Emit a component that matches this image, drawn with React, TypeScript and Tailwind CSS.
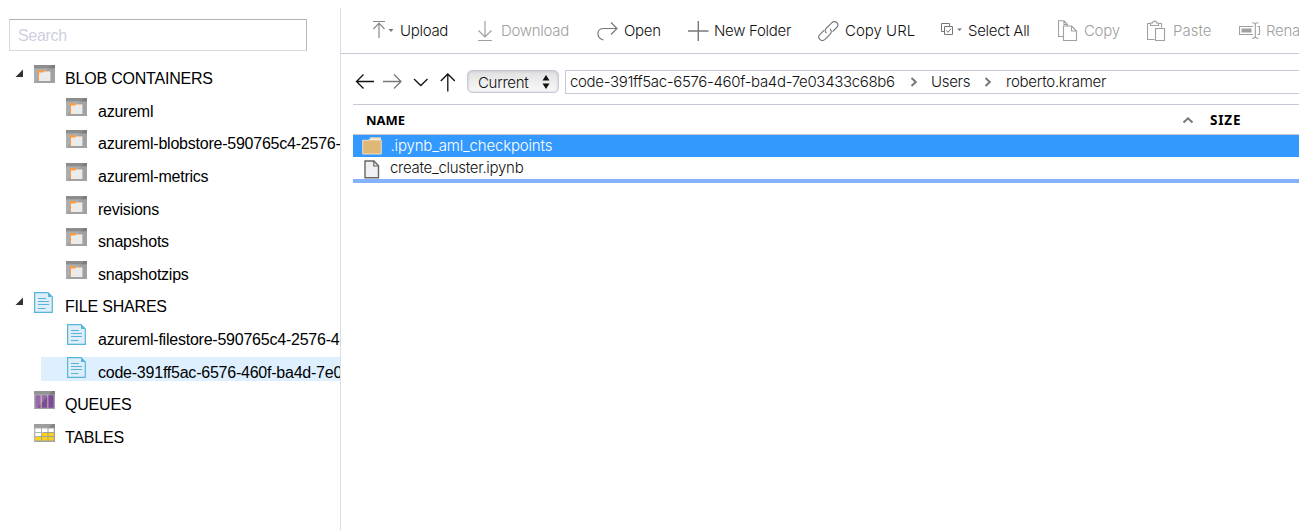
import type { ReactNode } from "react";

function ContainerIcon() {
  return (
    <svg width="21" height="18" viewBox="0 0 21 18" className="block">
      <rect width="21" height="18" fill="#a0a1a2" />
      <rect width="21" height="3.3" fill="#7d7d7d" />
      <path d="M0 0H18L14 4L0 18Z" fill="#ffffff" opacity="0.13" />
      <path d="M4 16V5H8.6L9.8 6H16V16Z" fill="#fb9c45" />
      <path d="M5 16V7.6H9L10 6.6H16.4V16Z" fill="#ebebeb" />
    </svg>
  );
}

function ShareIcon() {
  return (
    <svg width="19" height="21" viewBox="0 0 19 21" className="block">
      <path d="M0.6 0.6H14L18.3 5V20.3H0.6Z" fill="#ddeef8" stroke="#59b4d9" strokeWidth="1.2" />
      <path d="M14 0.5V5H18.5Z" fill="#59b4d9" />
      <path d="M4 6.5H12M4 9.5H15M4 12.5H15M4 16.5H11.5" stroke="#59b4d9" strokeWidth="1" />
    </svg>
  );
}

function QueueIcon() {
  return (
    <svg width="21" height="18" viewBox="0 0 21 18" className="block">
      <rect width="21" height="18" fill="#a0a1a2" />
      <rect width="21" height="3.5" fill="#7d7d7d" />
      <path d="M1.4 4.2H6.5V16.7H1.4ZM8 4.2H13V16.7H8ZM14.5 4.2H19.6V16.7H14.5Z" fill="#804998" />
      <path d="M0 0H18L3.5 17H0Z" fill="#ffffff" opacity="0.18" />
    </svg>
  );
}

function TableIcon() {
  return (
    <svg width="21" height="18" viewBox="0 0 21 18" className="block">
      <rect width="21" height="18" fill="#a0a1a2" />
      <rect width="21" height="3.7" fill="#858585" />
      <path d="M0 0H18L14 4L0 18Z" fill="#ffffff" opacity="0.2" />
      <path d="M1.3 4.5H7V8H1.3ZM8 4.5H13.5V8H8ZM14.5 4.5H19.7V8H14.5ZM1.3 9H7V12H1.3Z" fill="#fff" />
      <path d="M8 9H13.5V12H8ZM14.5 9H19.7V12H14.5ZM1.3 13H7V16.4H1.3ZM8 13H13.5V16.4H8ZM14.5 13H19.7V16.4H14.5Z" fill="#fcd116" />
    </svg>
  );
}

const treeIcons = {
  container: <ContainerIcon />,
  share: <ShareIcon />,
  queue: <QueueIcon />,
  table: <TableIcon />,
};

type Node = {
  label: string;
  icon: keyof typeof treeIcons;
  root?: boolean;
  open?: boolean;
  selected?: boolean;
};

const nodes: Node[] = [
  { label: "BLOB CONTAINERS", icon: "container", root: true, open: true },
  { label: "azureml", icon: "container" },
  { label: "azureml-blobstore-590765c4-2576-", icon: "container" },
  { label: "azureml-metrics", icon: "container" },
  { label: "revisions", icon: "container" },
  { label: "snapshots", icon: "container" },
  { label: "snapshotzips", icon: "container" },
  { label: "FILE SHARES", icon: "share", root: true, open: true },
  { label: "azureml-filestore-590765c4-2576-4", icon: "share" },
  { label: "code-391ff5ac-6576-460f-ba4d-7e0", icon: "share", selected: true },
  { label: "QUEUES", icon: "queue", root: true },
  { label: "TABLES", icon: "table", root: true },
];

function TreeRow({ node }: { node: Node }) {
  return (
    <div className={node.root ? "h-[32.6px]" : "h-[32.6px] pl-[41px]"}>
      <div
        className={`flex h-[24.6px] items-start ${node.root ? "pl-[15px]" : "pl-[25px]"} ${node.selected ? "bg-[#def0ff]" : ""}`}
      >
        {node.root && (
          <span className="w-[18px] shrink-0 pt-[6px]">
            {node.open && (
              <svg width="9" height="9" viewBox="0 0 9 9" className="block">
                <path d="M8 0.5V8H0.5Z" fill="#333" />
              </svg>
            )}
          </span>
        )}
        <span className="flex h-[22px] w-8 shrink-0 items-center justify-start">
          <span className={node.icon === "share" ? "pl-px" : node.root ? "pl-[0.5px]" : ""}>{treeIcons[node.icon]}</span>
        </span>
        <span
          className={`pt-1 text-[16px] leading-6 whitespace-nowrap text-black ${node.root ? "tracking-[-0.2px]" : "tracking-[-0.23px]"}`}
        >
          {node.label}
        </span>
      </div>
    </div>
  );
}

function Glyph({ w, h, children, stroke = "#777", sw = 1.2 }: { w: number; h: number; children: ReactNode; stroke?: string; sw?: number }) {
  return (
    <svg width={w} height={h} viewBox={`0 0 ${w} ${h}`} fill="none" stroke={stroke} strokeWidth={sw} className="block shrink-0">
      {children}
    </svg>
  );
}

const actions: { label: string; off?: boolean; width: string; iconWidth: string; track?: string; icon: ReactNode }[] = [
  {
    label: "Upload", width: "w-[105px]", iconWidth: "w-7",
    icon: (
      <Glyph w={22} h={22}>
        <path d="M1 1.5H13M7 18V3M1.5 9L7 3.2L12.5 9" stroke="#888" />
        <path d="M16.5 9H21.5L19 12Z" fill="#777" stroke="none" />
      </Glyph>
    ),
  },
  {
    label: "Download", off: true, width: "w-[120px]", iconWidth: "w-6",
    icon: (
      <Glyph w={17} h={22} stroke="#a0a0a0">
        <path d="M8 1V17M1.5 10.5L8 17L14.5 10.5M1 20.5H15" />
      </Glyph>
    ),
  },
  {
    label: "Open", width: "w-[91px]", iconWidth: "w-[27px]",
    icon: (
      <Glyph w={22} h={22} stroke="#777">
        <path d="M6.5 20C-1 18 -1 8.5 7 8.5H19.5M14 2.5L20 8.5L14 14.5" />
      </Glyph>
    ),
  },
  {
    label: "New Folder", width: "w-[130px]", iconWidth: "w-[26px]",
    icon: (
      <Glyph w={22} h={22} stroke="#777" sw={1.4}>
        <path d="M0 11H20.5M10.3 1V21" />
      </Glyph>
    ),
  },
  {
    label: "Copy URL", width: "w-[123px]", iconWidth: "w-[27px]", track: "tracking-[0px]",
    icon: (
      <Glyph w={21} h={22} stroke="#777" sw={1.1}>
        <path d="M8.5 13.2C6.5 11.5 7 9.5 8.5 8L13.7 2.8C15.3 1.2 17.6 1.3 18.8 2.5C20.2 4 20.2 6 18.7 7.5L14.5 11.7" />
        <path d="M12 9C14 10.8 13.4 13 12 14.4L7 19.3C5.4 20.8 3.2 20.8 1.8 19.4C0.4 18 0.5 15.8 2 14.3L6.2 10.2" />
      </Glyph>
    ),
  },
  {
    label: "Select All", width: "w-[117px]", iconWidth: "w-[27px]",
    icon: (
      <Glyph w={22} h={22} stroke="#777" sw={1}>
        <path d="M3 11.5H0.5V3.5H8.5V6M3.5 6.5H11.5V14.5H3.5ZM5.3 10.5L7 12.3L10 8.7" />
        <path d="M16 8.5H21L18.5 11Z" fill="#777" stroke="none" />
      </Glyph>
    ),
  },
  {
    label: "Copy", off: true, width: "w-[89px]", iconWidth: "w-[26px]",
    icon: (
      <Glyph w={20} h={22} stroke="#a0a0a0" sw={1.1}>
        <path d="M5.5 16.5H0.5V0.8H6L9.5 4.5V6M6 0.8V4.5H9.5M5.5 6H13.5L18.5 11V20.5H5.5ZM13.5 6V11H18.5" />
      </Glyph>
    ),
  },
  {
    label: "Paste", off: true, width: "w-[92px]", iconWidth: "w-[26px]", track: "tracking-[0px]",
    icon: (
      <Glyph w={19} h={22} stroke="#a0a0a0" sw={1.1}>
        <path d="M7.5 19.5H0.5V3.5H3.5M11.5 3.5H14.5V7.5M3.5 5.5V3H5.5C5.5 0.5 9.5 0.5 9.5 3H11.5V5.5ZM8.5 8.5H17.5V20.5H8.5Z" />
      </Glyph>
    ),
  },
  {
    label: "Rena", off: true, width: "w-[90px]", iconWidth: "w-[27px]",
    icon: (
      <Glyph w={22} h={22} stroke="#a0a0a0" sw={1.1}>
        <path d="M14 6.5H0.5V14.5H14M18.5 6.5H20.5V14.5H18.5M13 2.7C15 2.7 16.3 3 16.3 4.5V16.5C16.3 18 15 18.3 13 18.3M19.5 2.7C17.5 2.7 16.3 3 16.3 4.5M19.5 18.3C17.5 18.3 16.3 18 16.3 16.5" />
        <rect x="2.5" y="8.5" width="10" height="4" fill="#a0a0a0" stroke="none" />
      </Glyph>
    ),
  },
];

function Chevron() {
  return (
    <Glyph w={8} h={10} stroke="#777" sw={2}>
      <path d="M1.5 1L5.8 5L1.5 9" />
    </Glyph>
  );
}

export default function App() {
  return (
    <div className="flex h-[532px] w-[1300px] overflow-hidden bg-white pt-2 pr-px pb-0.5 font-['Liberation_Sans',Arial,sans-serif]">
      <aside className="w-[340px] shrink-0 overflow-hidden">
        <div className="pt-[11px] pl-[9px]">
          <input
            placeholder="Search"
            className="block h-8 w-[298px] border border-[#dadada] border-t-[#b0b0b0] border-r-[#b8b8b8] px-2 pt-0.5 text-[16px] tracking-[-0.3px] text-black outline-none placeholder:text-[#cfcfdf]"
          />
        </div>
        <nav className="pt-[12.2px]">
          {nodes.map((n) => (
            <TreeRow key={n.label} node={n} />
          ))}
        </nav>
      </aside>

      <main className="min-w-0 flex-1 overflow-hidden border-l border-[#dcdce6] font-['Inter','Liberation_Sans',sans-serif] font-light text-[#111]">
        <div className="flex h-[46px] items-center border-b border-[#c8c8dd] pl-[31px]">
          {actions.map((a) => (
            <button key={a.label} className={`flex shrink-0 items-center ${a.width} ${a.off ? "text-[#a0a0a0]" : "text-[#111]"}`}>
              <span className={`shrink-0 ${a.iconWidth}`}>{a.icon}</span>
              <span className={`pt-0.5 text-[15px] whitespace-nowrap ${a.track ?? "tracking-[-0.3px]"}`}>{a.label}</span>
            </button>
          ))}
        </div>

        <div className="flex h-[50px] items-center pt-[5px] pl-[14px]">
          <span className="w-[27px] shrink-0">
            <Glyph w={20} h={20} stroke="#111" sw={1.3}>
              <path d="M19 9.5H1.5M8.5 2.5L1.5 9.5L8.5 16.5" />
            </Glyph>
          </span>
          <span className="w-[29px] shrink-0">
            <Glyph w={20} h={20} stroke="#777" sw={1.3}>
              <path d="M1 9.5H18.5M12 2.5L19 9.5L12 16.5" />
            </Glyph>
          </span>
          <span className="w-[28px] shrink-0">
            <Glyph w={18} h={20} stroke="#111" sw={1.3}>
              <path d="M3 7L9.8 13.5L16.5 7" />
            </Glyph>
          </span>
          <span className="w-[28px] shrink-0">
            <Glyph w={17} h={20} stroke="#111" sw={1.3}>
              <path d="M8.8 19.5V2M1.8 9L8.8 2L15.8 9" />
            </Glyph>
          </span>
          <button className="flex h-[23px] w-[92px] shrink-0 items-center justify-between rounded-[5px] border border-[#c8c8d8] bg-linear-to-b from-[#e0e0e2] to-[#fafafa] pr-[8px] pl-[10px] shadow-[inset_0_0_3px_rgba(0,0,0,0.18)]">
            <span className="pt-[3px] text-[15px] tracking-[-0.3px]">Current</span>
            <svg width="8" height="14" viewBox="0 0 8 14" fill="#111">
              <path d="M4 0L7.5 5.5H0.5ZM4 14L0.5 8.5H7.5Z" />
            </svg>
          </button>
          <div className="ml-[6px] flex h-6 min-w-0 flex-1 items-center overflow-hidden border border-r-0 border-[#c8c8dd] pl-1 text-[15px] whitespace-nowrap">
            <span className="w-[340px] shrink-0 pt-px tracking-[-0.33px]">code-391ff5ac-6576-460f-ba4d-7e03433c68b6</span>
            <Chevron />
            <span className="w-[55px] shrink-0 pt-px pl-[13px] tracking-[-0.3px]">Users</span>
            <span className="pl-[11px]"><Chevron /></span>
            <span className="pt-px pl-[14px] tracking-[-0.25px]">roberto.kramer</span>
          </div>
        </div>

        <div className="pl-[12px] text-[15px] whitespace-nowrap">
          <div className="flex h-[31px] items-center border-t border-b border-[#c8c8d4] pl-[13px] font-['Noto_Sans',sans-serif] text-[13px] font-bold text-black">
            <span className="w-[816px] pt-0.5">NAME</span>
            <Glyph w={12} h={8} stroke="#777" sw={2}>
              <path d="M1.5 6.5L6 2.3L10.5 6.5" />
            </Glyph>
            <span className="pt-px pl-[16px] text-[13.5px] tracking-[0.8px]">SIZE</span>
          </div>
          <div className="flex h-[22px] items-center bg-[#3399ff] pl-[9px] text-white">
            <svg width="20" height="18" viewBox="0 0 20 18" className="shrink-0">
              <path d="M0.7 17V3.3H7L8.5 0.8H18.5V3.2H19.3V17Z" fill="#dfb878" stroke="#eddcc0" strokeWidth="1" />
              <path d="M8.7 1.5H18V3.3H7.6Z" fill="#f7f1e4" />
            </svg>
            <span className="pl-[8.5px] tracking-[-0.17px]">.ipynb_aml_checkpoints</span>
          </div>
          <div className="flex h-[22px] items-center pl-[11px]">
            <svg width="16" height="19" viewBox="0 0 16 19" className="mt-[2px] shrink-0">
              <path d="M1 1H10L14.5 5.7V17.8H1Z" fill="#f0f0f4" stroke="#666" strokeWidth="1.4" />
              <path d="M9.8 1V6H14.5" fill="none" stroke="#666" strokeWidth="1.2" />
            </svg>
            <span className="pl-[10px] tracking-[-0.28px]">create_cluster.ipynb</span>
          </div>
          <div className="h-1 bg-[#85b2fb]" />
        </div>
      </main>
    </div>
  );
}
